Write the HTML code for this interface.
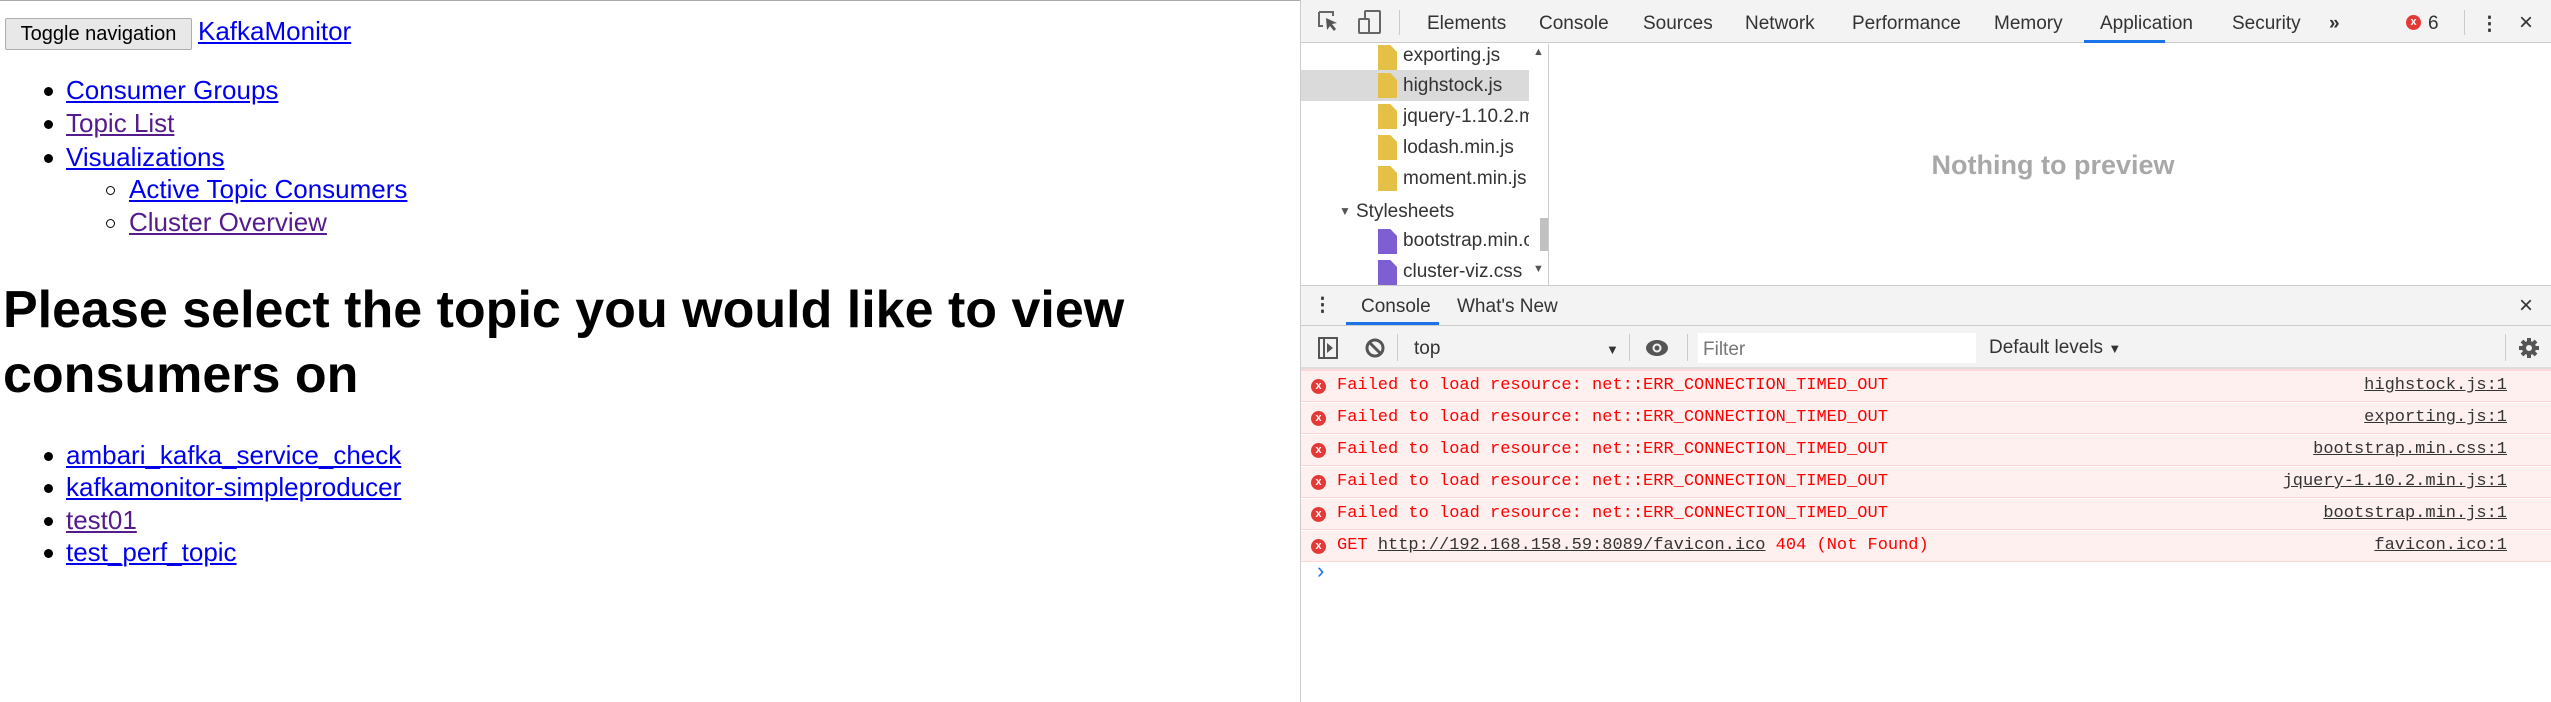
<!DOCTYPE html>
<html><head><meta charset="utf-8"><style>
*{box-sizing:border-box;margin:0;padding:0}
body{width:2551px;height:702px;overflow:hidden;background:#fff;font-family:"Liberation Sans",sans-serif;position:relative}
.a{position:absolute;white-space:nowrap}
a{color:#0000ee}
a.v{color:#551a8b}
.li{position:absolute;font-size:26px;line-height:33px;white-space:nowrap}
.b{position:absolute;width:9px;height:9px;border-radius:50%;background:#000}
.c{position:absolute;width:9px;height:9px;border-radius:50%;border:1.5px solid #000}
.dt{position:absolute;left:1300px;top:0;width:1251px;height:702px;border-left:1px solid #ccc;font-size:19px;color:#333}
.tab{position:absolute;top:13px;font-size:19px;color:#333;white-space:nowrap}
.f{position:absolute;font-size:19px;color:#333;white-space:nowrap;overflow:hidden}
.fi{position:absolute;width:19px;height:25px;background:#e4c046;clip-path:polygon(0 0,65% 0,100% 28%,100% 100%,0 100%)}
.fi.p{background:#7d5fd1}
.msg{position:absolute;left:0;width:1250px;height:31px;background:#fff0f0;border-bottom:1px solid #ffd6d6;font-family:"Liberation Mono",monospace;font-size:17px;color:#ff0000;line-height:30px;white-space:nowrap}
.msg .e{position:absolute;left:10px;top:8px;width:15px;height:15px;border-radius:50%;background:#e53935;color:#fff;font-family:"Liberation Sans";font-size:11px;line-height:15px;text-align:center;font-weight:bold}
.msg .t{position:absolute;left:36px}
.msg .r{position:absolute;right:44px;color:#333;text-decoration:underline}
</style></head><body>
<div style="position:absolute;left:0;top:0;width:1300px;height:1px;background:#aaa"></div>
<div class="a" style="left:5px;top:18px;width:187px;height:32px;background:#e8e8e8;border:1px solid #adadad;border-radius:2px;font-size:20px;line-height:30px;text-align:center;color:#000">Toggle navigation</div>
<div class="a" style="left:198px;top:13px;font-size:26px;line-height:36px"><a href="#">KafkaMonitor</a></div>

<div class="b" style="left:44px;top:87px"></div><div class="li" style="left:66px;top:74px"><a href="#">Consumer Groups</a></div>
<div class="b" style="left:44px;top:120px"></div><div class="li" style="left:66px;top:107px"><a class="v" href="#">Topic List</a></div>
<div class="b" style="left:44px;top:154px"></div><div class="li" style="left:66px;top:141px"><a href="#">Visualizations</a></div>
<div class="c" style="left:106px;top:186px"></div><div class="li" style="left:129px;top:173px"><a href="#">Active Topic Consumers</a></div>
<div class="c" style="left:106px;top:219px"></div><div class="li" style="left:129px;top:206px"><a class="v" href="#">Cluster Overview</a></div>

<div class="a" style="left:3px;top:278px;font-size:52px;font-weight:bold;line-height:65px;color:#000">Please select the topic you would like to view<br>consumers on</div>

<div class="b" style="left:44px;top:452px"></div><div class="li" style="left:66px;top:439px"><a href="#">ambari_kafka_service_check</a></div>
<div class="b" style="left:44px;top:484px"></div><div class="li" style="left:66px;top:471px"><a href="#">kafkamonitor-simpleproducer</a></div>
<div class="b" style="left:44px;top:517px"></div><div class="li" style="left:66px;top:504px"><a class="v" href="#">test01</a></div>
<div class="b" style="left:44px;top:549px"></div><div class="li" style="left:66px;top:536px"><a href="#">test_perf_topic</a></div>

<div class="dt">
 <div style="position:absolute;left:0;top:0;width:1251px;height:43px;background:#f3f3f3;border-bottom:1px solid #ccc"></div>
 <svg class="a" style="left:16px;top:10px" width="24" height="24" viewBox="0 0 24 24"><path d="M2 2h14v4M2 2v14h4" fill="none" stroke="#666" stroke-width="2"/><path d="M9 8l11 5-5 1 4 5-2 2-4-5-3 4z" fill="#555"/></svg>
 <svg class="a" style="left:57px;top:10px" width="24" height="25" viewBox="0 0 24 25"><rect x="7" y="1" width="15" height="22" rx="1" fill="none" stroke="#666" stroke-width="2"/><rect x="1" y="9" width="10" height="14" rx="1" fill="#f3f3f3" stroke="#666" stroke-width="2"/></svg>
 <div style="position:absolute;left:98px;top:10px;width:1px;height:25px;background:#ccc"></div>
 <div class="tab" style="left:126px">Elements</div>
 <div class="tab" style="left:238px">Console</div>
 <div class="tab" style="left:342px">Sources</div>
 <div class="tab" style="left:444px">Network</div>
 <div class="tab" style="left:551px">Performance</div>
 <div class="tab" style="left:693px">Memory</div>
 <div class="tab" style="left:799px">Application</div>
 <div style="position:absolute;left:783px;top:40px;width:81px;height:3px;background:#1a73e8"></div>
 <div class="tab" style="left:931px">Security</div>
 <div class="tab" style="left:1028px;font-weight:bold">»</div>
 <div style="position:absolute;left:1105px;top:15px;width:15px;height:15px;border-radius:50%;background:#e53935;color:#fff;font-size:11px;line-height:15px;text-align:center;font-weight:bold">x</div>
 <div class="tab" style="left:1127px">6</div>
 <div style="position:absolute;left:1163px;top:10px;width:1px;height:25px;background:#ccc"></div>
 <div class="tab" style="left:1179px;font-weight:bold">⋮</div>
 <div class="tab" style="left:1218px;font-size:24px;top:9px">×</div>

 <div style="position:absolute;left:0;top:44px;width:248px;height:241px;background:#fff;border-right:1px solid #ccc"></div>
 <div style="position:absolute;left:0;top:70px;width:228px;height:31px;background:#dadada"></div>
 <div style="position:absolute;left:239px;top:218px;width:8px;height:33px;background:#c1c1c1"></div>
 <div class="a" style="left:232px;top:46px;font-size:11px;color:#555">▲</div>
 <div class="a" style="left:232px;top:263px;font-size:11px;color:#555">▼</div>
 <div class="fi" style="left:77px;top:45px"></div><div class="f" style="left:102px;top:45px">exporting.js</div>
 <div class="fi" style="left:77px;top:73px"></div><div class="f" style="left:102px;top:75px">highstock.js</div>
 <div class="fi" style="left:77px;top:104px"></div><div class="f" style="left:102px;top:106px;width:126px">jquery-1.10.2.min.js</div>
 <div class="fi" style="left:77px;top:135px"></div><div class="f" style="left:102px;top:137px">lodash.min.js</div>
 <div class="fi" style="left:77px;top:166px"></div><div class="f" style="left:102px;top:168px">moment.min.js</div>
 <div class="f" style="left:38px;top:204px;font-size:12px;color:#555">▼</div><div class="f" style="left:55px;top:201px">Stylesheets</div>
 <div class="fi p" style="left:77px;top:229px"></div><div class="f" style="left:102px;top:230px;width:126px">bootstrap.min.css</div>
 <div class="fi p" style="left:77px;top:260px"></div><div class="f" style="left:102px;top:261px">cluster-viz.css</div>

 <div class="a" style="left:752px;top:150px;width:0;font-size:27px;font-weight:bold;color:#a8a8a8"><span style="position:absolute;transform:translateX(-50%)">Nothing to preview</span></div>

 <div style="position:absolute;left:0;top:285px;width:1251px;height:41px;background:#f3f3f3;border-top:1px solid #ccc;border-bottom:1px solid #ccc"></div>
 <div class="tab" style="left:12px;top:294px;font-weight:bold">⋮</div>
 <div class="tab" style="left:60px;top:296px">Console</div>
 <div style="position:absolute;left:45px;top:322px;width:93px;height:3px;background:#1a73e8"></div>
 <div class="tab" style="left:156px;top:296px">What's New</div>
 <div class="tab" style="left:1218px;top:292px;font-size:24px">×</div>

 <div style="position:absolute;left:0;top:326px;width:1251px;height:43px;background:#f3f3f3;border-bottom:2px solid #ddd"></div>
 <svg class="a" style="left:17px;top:337px" width="20" height="22" viewBox="0 0 20 22"><rect x="1" y="1" width="18" height="20" fill="none" stroke="#555" stroke-width="2"/><path d="M6 1v20" stroke="#555" stroke-width="2"/><path d="M9 6l6 5-6 5z" fill="#555"/></svg>
 <svg class="a" style="left:63px;top:337px" width="22" height="22" viewBox="0 0 22 22"><circle cx="11" cy="11" r="8" fill="none" stroke="#555" stroke-width="3"/><path d="M5 5l12 12" stroke="#555" stroke-width="3"/></svg>
 <div style="position:absolute;left:96px;top:334px;width:1px;height:27px;background:#ccc"></div>
 <div class="tab" style="left:113px;top:338px">top</div>
 <div class="tab" style="left:305px;top:342px;font-size:13px">▼</div>
 <div style="position:absolute;left:328px;top:334px;width:1px;height:27px;background:#ccc"></div>
 <svg class="a" style="left:344px;top:338px" width="24" height="20" viewBox="0 0 24 20"><ellipse cx="12" cy="10" rx="11" ry="8" fill="#555"/><circle cx="12" cy="10" r="4.5" fill="#f3f3f3"/><circle cx="12" cy="10" r="2.5" fill="#555"/></svg>
 <div style="position:absolute;left:386px;top:334px;width:1px;height:27px;background:#ccc"></div>
 <div style="position:absolute;left:397px;top:333px;width:278px;height:30px;background:#fff"></div>
 <div class="tab" style="left:402px;top:339px;color:#777">Filter</div>
 <div class="tab" style="left:688px;top:337px">Default levels <span style="font-size:13px">▼</span></div>
 <div style="position:absolute;left:1204px;top:334px;width:1px;height:27px;background:#ccc"></div>
 <svg class="a" style="left:1216px;top:336px" width="24" height="24" viewBox="0 0 24 24"><g stroke="#555" stroke-width="4"><path d="M12 2v20M2 12h20M5 5l14 14M19 5L5 19"/></g><circle cx="12" cy="12" r="7" fill="#555"/><circle cx="12" cy="12" r="3" fill="#f3f3f3"/></svg>

 <div style="position:absolute;left:0;top:369px;width:1251px;height:2px;background:#ffd6d6"></div>
 <div class="msg" style="top:371px"><div class="e">x</div><div class="t">Failed to load resource: net::ERR_CONNECTION_TIMED_OUT</div><div class="r">highstock.js:1</div></div>
 <div class="msg" style="top:403px"><div class="e">x</div><div class="t">Failed to load resource: net::ERR_CONNECTION_TIMED_OUT</div><div class="r">exporting.js:1</div></div>
 <div class="msg" style="top:435px"><div class="e">x</div><div class="t">Failed to load resource: net::ERR_CONNECTION_TIMED_OUT</div><div class="r">bootstrap.min.css:1</div></div>
 <div class="msg" style="top:467px"><div class="e">x</div><div class="t">Failed to load resource: net::ERR_CONNECTION_TIMED_OUT</div><div class="r">jquery-1.10.2.min.js:1</div></div>
 <div class="msg" style="top:499px"><div class="e">x</div><div class="t">Failed to load resource: net::ERR_CONNECTION_TIMED_OUT</div><div class="r">bootstrap.min.js:1</div></div>
 <div class="msg" style="top:531px"><div class="e">x</div><div class="t">GET <span style="color:#333;text-decoration:underline">http://192.168.158.59:8089/favicon.ico</span> 404 (Not Found)</div><div class="r">favicon.ico:1</div></div>
 <div class="a" style="left:16px;top:558px;font-size:22px;color:#1a73e8">›</div>
</div>
</body></html>
